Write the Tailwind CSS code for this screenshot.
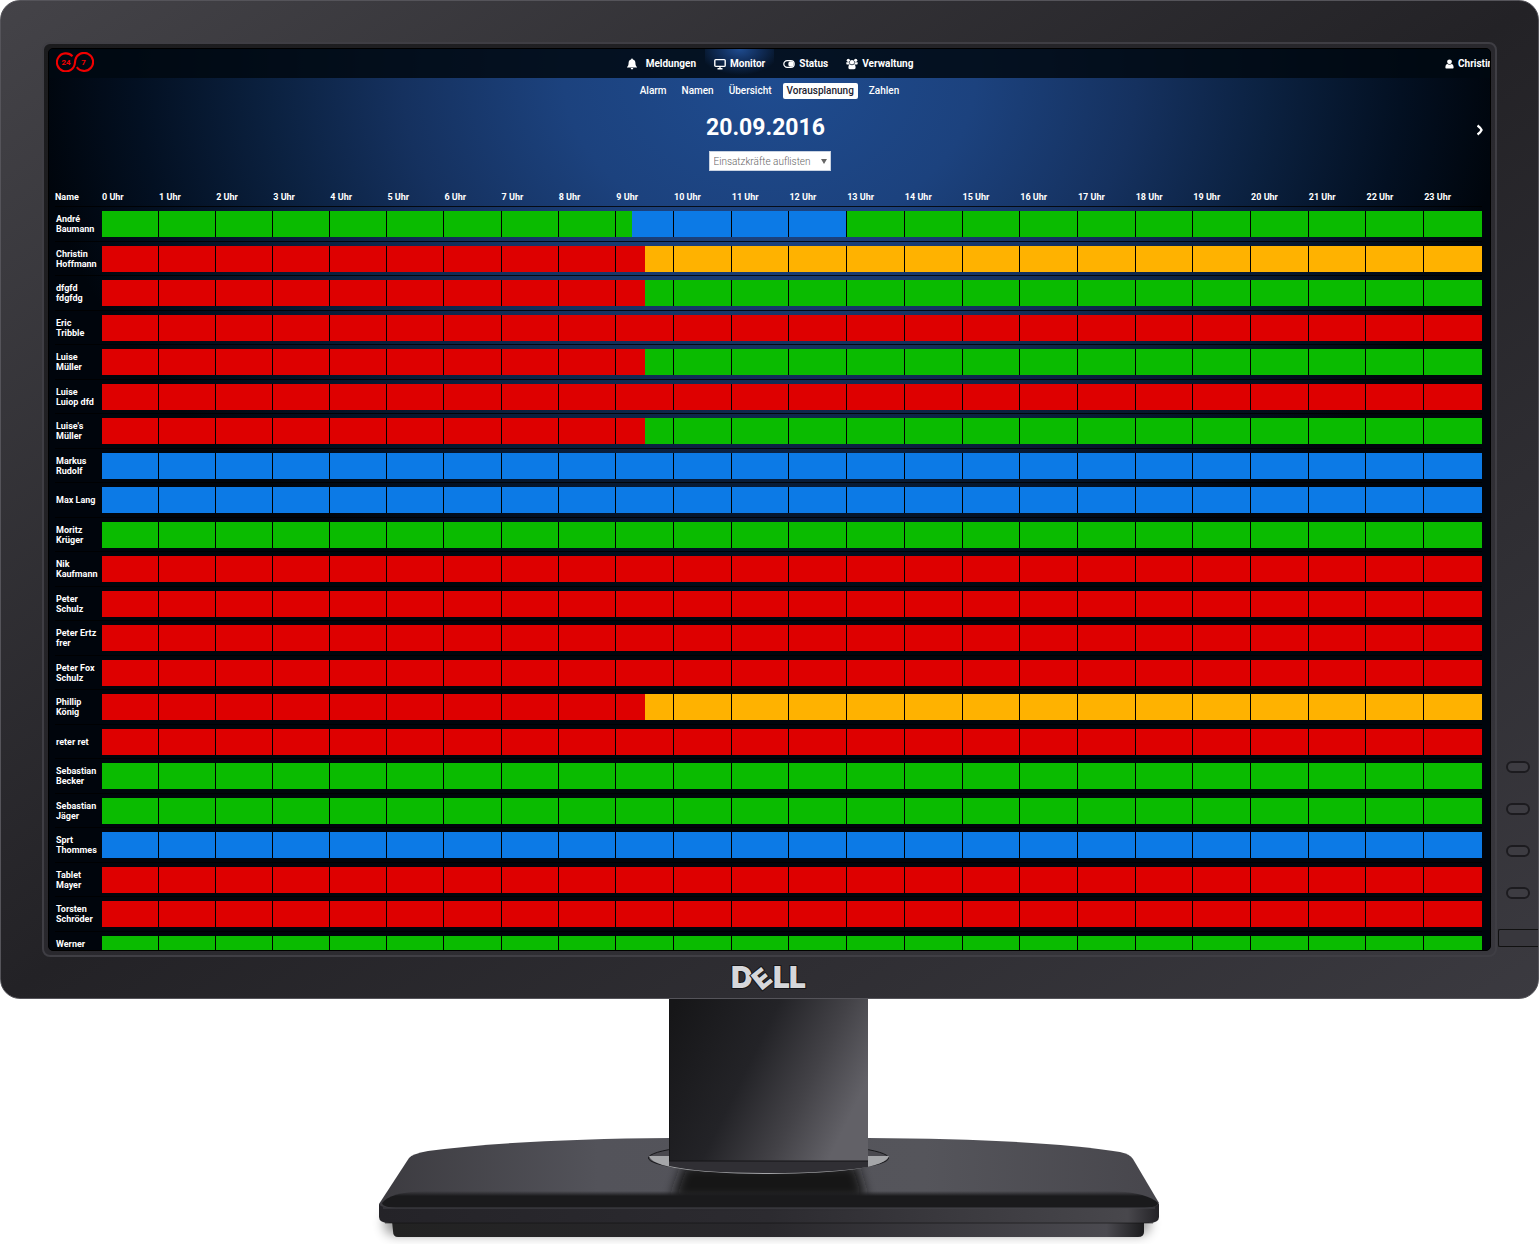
<!DOCTYPE html>
<html lang="de">
<head>
<meta charset="utf-8">
<title>24/7 – Vorausplanung</title>
<script src="https://cdn.jsdelivr.net/npm/@tailwindcss/browser@4"></script>
</head>
<body class="bg-white font-[Roboto,sans-serif] text-white">
<div class="overflow-hidden">
  <!-- monitor housing -->
  <div class="relative rounded-[20px] border border-[#55545a] bg-linear-to-br from-[#444348] via-[#232226] to-[#3b3a40] p-[41px]">
    <div class="rounded-lg border-2 border-[#3f3e44] bg-linear-to-br from-[#1b1b1d] via-[#29282d] to-[#39383e] p-1">
      <div class="aspect-[1443/903] overflow-hidden rounded-[5px] border border-black bg-[#00050c] bg-[radial-gradient(ellipse_51%_62%_at_50%_3%,#1f4c90_0%,#1c427e_28%,#15315f_50%,#0b2140_68%,#031022_86%,#00050c_100%)]">
        <header class="grid h-[29px] grid-cols-[1fr_auto_1fr] items-center bg-[#000810]/85">
          <a href="#" aria-label="24/7" class="mb-[3px] ml-[7px] w-[38px]">
            <svg viewBox="0 0 38 20" class="block h-5 w-[38px]" fill="none" stroke="#f00000" stroke-width="2.1">
              <path d="M16.5 4.2A9 9 0 1 0 18.9 11L19.3 8A9 9 0 1 1 20.8 15.2"/>
              <text x="10" y="13" text-anchor="middle" font-family="Roboto" font-weight="700" font-size="8" fill="#f00000" stroke="none">24</text>
              <text x="27.5" y="13" text-anchor="middle" font-family="Roboto" font-weight="700" font-size="8" fill="#f00000" stroke="none">7</text>
            </svg>
          </a>
          <nav class="flex h-full items-center text-[10px] font-bold">
            <a href="#" class="flex items-center gap-2 px-[9px]">
              <svg viewBox="0 0 12 12" class="h-3 w-3" fill="currentColor"><path d="M6 .6c.6 0 .9.4.9.9C8.700 1.900 9.400 3.300 9.400 4.800 9.400 7.300 10 8 11 9.200V9.600H1V9.200C2 8 2.600 7.300 2.600 4.800 2.600 3.300 3.300 1.900 5.100 1.500 5.100 1 5.400.6 6 .6ZM4.700 10.100h2.600a1.300 1.300 0 0 1-2.600 0Z"/></svg>
              Meldungen</a>
            <a href="#" class="flex h-full items-center gap-1 bg-[radial-gradient(ellipse_60%_90%_at_50%_0%,#1f4c90_0%,#12305f_45%,transparent_100%)] px-[9px]">
              <svg viewBox="0 0 12 12" class="h-3 w-3" fill="none" stroke="currentColor" stroke-width="1.400"><rect x=".8" y="1.600" width="10.400" height="6.800" rx="1"/><path d="M6 8.500V10.500M3.500 10.700h5"/></svg>
              Monitor</a>
            <a href="#" class="flex items-center gap-1 px-[9px]">
              <svg viewBox="0 0 12 12" class="h-3 w-3"><rect x=".8" y="2.600" width="10.400" height="6.800" rx="3.400" fill="none" stroke="currentColor" stroke-width="1.200"/><circle cx="8" cy="6" r="2.700" fill="currentColor"/></svg>
              Status</a>
            <a href="#" class="flex items-center gap-1 px-[9px]">
              <svg viewBox="0 0 12 12" class="h-3 w-3" fill="currentColor"><circle cx="2.300" cy="2.300" r="1.600"/><circle cx="9.700" cy="2.300" r="1.600"/><circle cx="6" cy="4.300" r="2.200"/><path d="M.3 4.200h3C3.300 5.600 3.700 6.200 4.200 6.600H1.500C.6 6.600.3 6 .3 5.300ZM11.700 4.200h-3C8.700 5.600 8.300 6.200 7.800 6.600h2.700c.9 0 1.200-.6 1.200-1.300ZM2.400 9.500C2.400 7.600 3 6.600 4.200 6.500 5.300 7.400 6.700 7.400 7.800 6.500 9 6.600 9.600 7.600 9.600 9.500 9.600 10.700 9 11.200 8.200 11.200H3.800C3 11.200 2.400 10.700 2.400 9.500Z"/></svg>
              Verwaltung</a>
          </nav>
          <a href="#" class="flex w-[45px] items-center gap-1 justify-self-end text-[10px] font-bold whitespace-nowrap">
            <svg viewBox="0 0 9 10" class="h-[10px] w-[9px] shrink-0" fill="currentColor"><circle cx="4.500" cy="2.800" r="2.400"/><path d="M.4 8.600C.4 6.500 1.200 5.300 2.500 5.100 3.700 6 5.300 6 6.500 5.100 7.800 5.300 8.600 6.500 8.600 8.600 8.600 9.200 8.200 9.600 7.600 9.600H1.400C.8 9.600.4 9.200.4 8.600Z"/></svg>
            Christin</a>
        </header>
        <nav class="mt-[5px] flex justify-center gap-[7px] text-[10px] leading-4 font-medium">
          <a href="#" class="px-1">Alarm</a>
          <a href="#" class="px-1">Namen</a>
          <a href="#" class="px-1">Übersicht</a>
          <a href="#" class="rounded-xs bg-white px-1 text-[#1c2230]">Vorausplanung</a>
          <a href="#" class="px-1">Zahlen</a>
        </nav>
        <div class="mt-[15px] grid grid-cols-[1fr_auto_1fr] items-center">
          <h1 class="col-start-2 pr-2 text-[23px] leading-7 font-bold">20.09.2016</h1>
          <button aria-label="Nächster Tag" class="mt-1 mr-[6px] justify-self-end">
            <svg viewBox="0 0 8 12" class="h-3 w-2" fill="none" stroke="#fff" stroke-width="2.200"><path d="M1.500 1.500C3.500 3 5 4.500 5.600 6 5 7.500 3.500 9 1.500 10.500"/></svg>
          </button>
        </div>
        <div class="mt-[9px] flex justify-center">
          <div class="relative w-[122px]">
            <select aria-label="Einsatzkräfte" class="block h-5 w-full appearance-none border border-[#c9d3e2] bg-white pl-1 text-[10px] font-light text-[#666]"><option>Einsatzkräfte auflisten</option></select>
            <svg viewBox="0 0 6 5" class="pointer-events-none absolute top-2 right-1 h-[5px] w-[6px]" fill="#666"><path d="M0 0h6L3 5Z"/></svg>
          </div>
        </div>
        <div class="mt-4 mr-2 ml-[6px]">
          <table class="w-full table-fixed border-separate border-spacing-0 text-left text-[9px] leading-[10px] font-bold">
            <colgroup id="cols"></colgroup>
            <thead><tr id="hours" class="h-[19px]"></tr></thead>
            <tbody id="plan"></tbody>
          </table>
        </div>
      </div>
    </div>

    <!-- brand on the lower bezel -->
    <svg viewBox="0 0 80 40" role="img" aria-label="Dell" class="absolute bottom-0 left-1/2 h-10 w-20 -translate-x-1/2 overflow-visible" font-family="Inter, sans-serif" font-weight="900" font-size="30" fill="#d6d7da" stroke="#151518" stroke-width="2" paint-order="stroke">
      <text x="1" y="30">D</text>
      <text x="43" y="30">L</text>
      <text x="59" y="30">L</text>
      <text x="0" y="0" transform="translate(31.500 33) rotate(-39)" font-size="26">E</text>
    </svg>

    <!-- menu keys and power key -->
    <div class="absolute top-[76.2%] right-2 flex flex-col gap-[30px]">
      <button aria-label="Menü 1" class="h-3 w-6 rounded-full border-2 border-[#1c1b1f] bg-[#3d3c42]"></button>
      <button aria-label="Menü 2" class="h-3 w-6 rounded-full border-2 border-[#1c1b1f] bg-[#3d3c42]"></button>
      <button aria-label="Menü 3" class="h-3 w-6 rounded-full border-2 border-[#1c1b1f] bg-[#3d3c42]"></button>
      <button aria-label="Menü 4" class="h-3 w-6 rounded-full border-2 border-[#1c1b1f] bg-[#3d3c42]"></button>
    </div>
    <button aria-label="Ein/Aus" class="absolute top-[93.1%] right-0 h-[18px] w-10 rounded-l-xs border border-r-0 border-[#111] bg-[#38373d]"></button>
  </div>

  <!-- stand -->
  <svg viewBox="0 0 1539 245" class="block h-auto w-full">
    <defs>
      <linearGradient id="neck" x1="0" y1="0.100" x2="1" y2="0.500"><stop offset="0" stop-color="#161618"/><stop offset=".45" stop-color="#232327"/><stop offset=".75" stop-color="#434247"/><stop offset="1" stop-color="#626167"/></linearGradient>
      <linearGradient id="plate" x1="0" x2="1"><stop offset="0" stop-color="#3c3b40"/><stop offset=".28" stop-color="#53535a"/><stop offset=".7" stop-color="#55555b"/><stop offset="1" stop-color="#47464c"/></linearGradient>
      <linearGradient id="edge" x1="0" x2="1"><stop offset="0" stop-color="#242328"/><stop offset=".5" stop-color="#2c2b30"/><stop offset=".96" stop-color="#48474c"/><stop offset="1" stop-color="#232226"/></linearGradient>
      <linearGradient id="foot" x1="0" x2="1"><stop offset="0" stop-color="#222"/><stop offset=".5" stop-color="#29282c"/><stop offset=".95" stop-color="#4b4a50"/><stop offset="1" stop-color="#1c1c1e"/></linearGradient>
      <linearGradient id="lip" x1="0" x2="0" y1="0" y2="1"><stop offset="0" stop-color="#1a1a1c" stop-opacity="0"/><stop offset=".3" stop-color="#1a1a1c"/><stop offset="1" stop-color="#1a1a1c"/></linearGradient>
      <filter id="soft" x="-10%" y="-50%" width="120%" height="200%"><feGaussianBlur stdDeviation="6"/></filter>
      <filter id="soft2" x="-20%" y="-50%" width="140%" height="200%"><feGaussianBlur stdDeviation="6"/></filter>
    </defs>
    <rect x="384" y="212" width="766" height="24" rx="10" fill="#000" opacity=".4" filter="url(#soft)"/>
    <path d="M392 222H1144V233Q1144 238 1138 238H398Q393 238 393 232Z" fill="url(#foot)"/>
    <path d="M379 205H1159V218Q1159 224 1148 224H390Q379 224 379 218Z" fill="url(#edge)"/>
    <path d="M379 205L409 159Q412 155 428 152Q520 140 670 139H868Q1040 140 1120 153Q1130 155 1133 160L1159 204Q1158 209 1140 209H400Q380 209 379 205Z" fill="url(#plate)"/>
    <path d="M684 166H856L866 200H672Z" fill="#151517" filter="url(#soft2)"/>
    <path d="M382 204Q390 193 425 192H1115Q1148 194 1158 204Q1158 209 1140 209H400Q383 209 382 204Z" fill="url(#lip)"/>
    <path d="M383 209H1155" stroke="#45444a"/>
    <path d="M385 224H1153" stroke="#111" stroke-opacity=".6"/>
    <ellipse cx="768.500" cy="159" rx="120" ry="15" fill="#4a494f" stroke="#17171a"/>
    <path d="M649 157H889Q884 174 768.500 175Q654 174 649 157Z" fill="#a5a6a9"/>
    <path d="M669 160H868V168Q830 174 768.500 174Q700 174 669 167Z" fill="#302f34"/>
    <rect x="669" width="199" height="162" fill="url(#neck)"/>
    <path d="M669.500 0V162M669 162H868" stroke="#141416" fill="none"/>
  </svg>
</div>

<script>
// Each person: [first line, second line, [colour, end hour], ...]
const people = [
  ["André", "Baumann", ["g", 9.27], ["b", 13], ["g", 24]],
  ["Christin", "Hoffmann", ["r", 9.5], ["y", 24]],
  ["dfgfd", "fdgfdg", ["r", 9.5], ["g", 24]],
  ["Eric", "Tribble", ["r", 24]],
  ["Luise", "Müller", ["r", 9.5], ["g", 24]],
  ["Luise", "Luiop dfd", ["r", 24]],
  ["Luise's", "Müller", ["r", 9.5], ["g", 24]],
  ["Markus", "Rudolf", ["b", 24]],
  ["Max Lang", "", ["b", 24]],
  ["Moritz", "Krüger", ["g", 24]],
  ["Nik", "Kaufmann", ["r", 24]],
  ["Peter", "Schulz", ["r", 24]],
  ["Peter Ertz", "frer", ["r", 24]],
  ["Peter Fox", "Schulz", ["r", 24]],
  ["Phillip", "König", ["r", 9.5], ["y", 24]],
  ["reter ret", "", ["r", 24]],
  ["Sebastian", "Becker", ["g", 24]],
  ["Sebastian", "Jäger", ["g", 24]],
  ["Sprt", "Thommes", ["b", 24]],
  ["Tablet", "Mayer", ["r", 24]],
  ["Torsten", "Schröder", ["r", 24]],
  ["Werner", "&nbsp;", ["g", 24]],
];
const fill = { g: "bg-[#0abb00]", r: "bg-[#de0000]", b: "bg-[#0c7ae6]", y: "bg-[#ffb200]" };
let cols = '<col class="w-[47px]">', head = '<th scope="col" class="p-0 align-middle">Name</th>';
for (let h = 0; h < 24; h++) {
  cols += h < 8 ? '<col class="w-[4%]">' : "<col>";
  head += `<th scope="col" class="p-0 align-middle">${h} Uhr</th>`;
}
document.getElementById("cols").innerHTML = cols;
document.getElementById("hours").innerHTML = head;
document.getElementById("plan").innerHTML = people.map(([first, second, ...spans]) => {
  let cells = "";
  for (let h = 0; h < 24; h++) {
    let from = h, parts = "";
    for (const [colour, end] of spans) {
      const to = Math.min(end, h + 1);
      if (to <= from) continue;
      parts += `<div class="${fill[colour]}" style="width:${(to - from) * 100}%"></div>`;
      from = to;
    }
    const edge = h < 23 ? "flex h-[26px] border-r border-black bg-black" : "flex h-[26px]";
    cells += `<td class="border-t border-black/80 p-0 pt-1 align-top"><div class="${edge}">${parts}</div></td>`;
  }
  return `<tr class="odd:h-[35px] even:h-[34px]"><th scope="row" class="border-t border-black/80 p-0 pl-px align-middle whitespace-nowrap">${first}${second ? "<br>" + second : ""}</th>${cells}</tr>`;
}).join("");
</script>
</body>
</html>
